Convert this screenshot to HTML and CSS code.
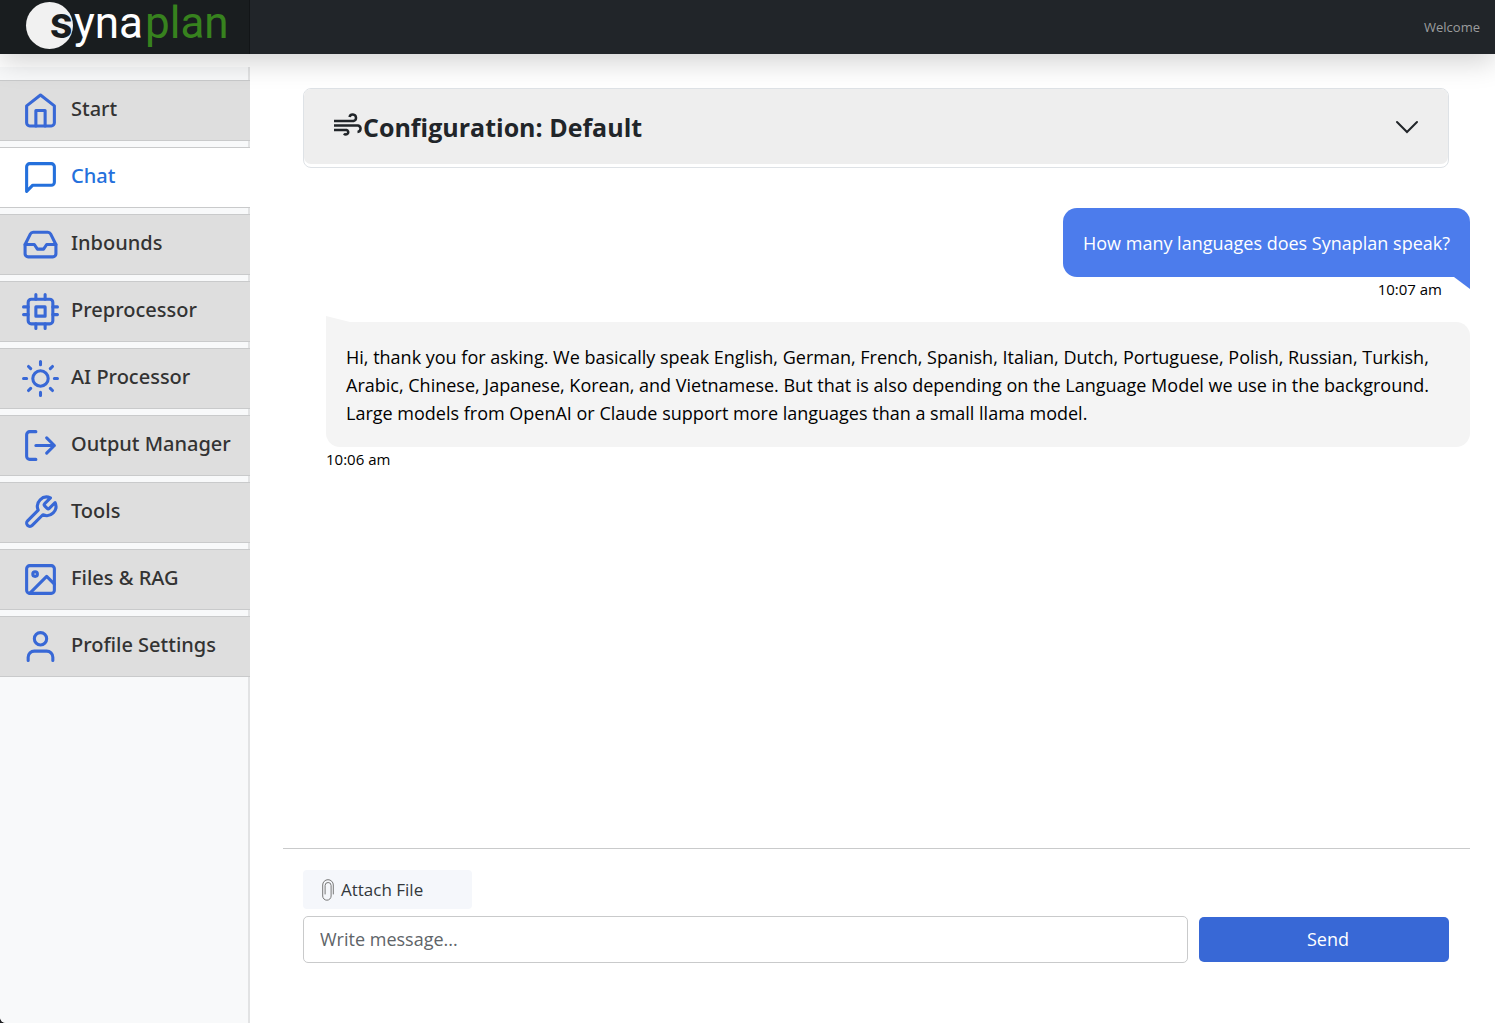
FILE: index.html
```html
<!DOCTYPE html>
<html lang="en">
<head>
<meta charset="utf-8">
<meta name="viewport" content="width=device-width, initial-scale=1">
<title>Synaplan Chat</title>
<link rel="stylesheet" href="styles.css">
</head>
<body>
<div class="app">
  <header class="topbar">
    <a class="brand" href="#" aria-label="Synaplan">
      <svg class="logo" width="210" height="54" viewBox="0 0 210 54">
        <circle cx="24.500" cy="25.500" r="23.500" fill="#f1f1f1"/>
        <text class="logo-s" x="25" y="38">s</text>
        <text class="logo-yna" x="49" y="38">yna</text>
        <text class="logo-plan" x="120" y="38">plan</text>
      </svg>
    </a>
    <span class="welcome">Welcome</span>
  </header>

  <div class="body">
    <aside class="sidebar">
      <nav class="nav">
        <a class="nav-item" href="#"><svg class="icon" viewBox="0 0 24 24"><path d="M3 9l9-7 9 7v11a2 2 0 0 1-2 2H5a2 2 0 0 1-2-2z"/><path d="M9 22V12h6v10"/></svg><span>Start</span></a>
        <a class="nav-item active" href="#" aria-current="page"><svg class="icon" viewBox="0 0 24 24"><path d="M21 15a2 2 0 0 1-2 2H7l-4 4V5a2 2 0 0 1 2-2h14a2 2 0 0 1 2 2z"/></svg><span>Chat</span></a>
        <a class="nav-item" href="#"><svg class="icon" viewBox="0 0 24 24"><path d="M22 12h-6l-2 3h-4l-2-3H2"/><path d="M5.45 5.11L2 12v6a2 2 0 0 0 2 2h16a2 2 0 0 0 2-2v-6l-3.45-6.89A2 2 0 0 0 16.76 4H7.24a2 2 0 0 0-1.79 1.11z"/></svg><span>Inbounds</span></a>
        <a class="nav-item" href="#"><svg class="icon" viewBox="0 0 24 24"><rect x="4" y="4" width="16" height="16" rx="2"/><rect x="9" y="9" width="6" height="6"/><path d="M9 1v3M15 1v3M9 20v3M15 20v3M20 9h3M20 14h3M1 9h3M1 14h3"/></svg><span>Preprocessor</span></a>
        <a class="nav-item" href="#"><svg class="icon" viewBox="0 0 24 24"><circle cx="12" cy="12" r="5"/><path d="M12 1v2M12 21v2M4.22 4.22l1.42 1.42M18.36 18.36l1.42 1.42M1 12h2M21 12h2M4.22 19.78l1.42-1.42M18.36 5.64l1.42-1.42"/></svg><span>AI Processor</span></a>
        <a class="nav-item" href="#"><svg class="icon" viewBox="0 0 24 24"><path d="M9 21H5a2 2 0 0 1-2-2V5a2 2 0 0 1 2-2h4"/><path d="M16 17l5-5-5-5M21 12H9"/></svg><span>Output Manager</span></a>
        <a class="nav-item" href="#"><svg class="icon" viewBox="0 0 24 24"><path d="M14.7 6.3a1 1 0 0 0 0 1.4l1.6 1.6a1 1 0 0 0 1.4 0l3.77-3.77a6 6 0 0 1-7.94 7.94l-6.91 6.91a2.12 2.12 0 0 1-3-3l6.91-6.91a6 6 0 0 1 7.94-7.94l-3.76 3.76z"/></svg><span>Tools</span></a>
        <a class="nav-item" href="#"><svg class="icon" viewBox="0 0 24 24"><rect x="3" y="3" width="18" height="18" rx="2"/><circle cx="8.5" cy="8.5" r="1.5"/><path d="M21 15l-5-5L5 21"/></svg><span>Files &amp; RAG</span></a>
        <a class="nav-item" href="#"><svg class="icon" viewBox="0 0 24 24"><path d="M20 21v-2a4 4 0 0 0-4-4H8a4 4 0 0 0-4 4v2"/><circle cx="12" cy="7" r="4"/></svg><span>Profile Settings</span></a>
      </nav>
    </aside>

    <main class="main">
      <section class="config">
        <button class="config-toggle" type="button" aria-expanded="false">
          <svg class="wind" viewBox="0 0 30 24"><path d="M1 8h19.500a3.300 3.300 0 1 0-4-4M1 12.500h24a3.300 3.300 0 0 1-.500 6.500M1 17h12.500a2.300 2.300 0 1 1-2.500 3.500"/></svg>
          <span class="config-title">Configuration: Default</span>
          <svg class="chevron" viewBox="0 0 24 14"><path d="M2 2l10 10L22 2"/></svg>
        </button>
      </section>

      <section class="messages">
        <article class="message user">
          <p class="bubble">How many languages does Synaplan speak?</p>
          <time class="time">10:07 am</time>
        </article>
        <article class="message bot">
          <p class="bubble">Hi, thank you for asking. We basically speak English, German, French, Spanish, Italian, Dutch, Portuguese, Polish, Russian, Turkish, Arabic, Chinese, Japanese, Korean, and Vietnamese. But that is also depending on the Language Model we use in the background. Large models from OpenAI or Claude support more languages than a small llama model.</p>
          <time class="time">10:06 am</time>
        </article>
      </section>

      <form class="composer">
        <button class="attach" type="button">
          <svg class="clip" viewBox="0 0 12 22"><path d="M11.300 15V6a5.300 5.300 0 0 0-10.600 0v11a4.200 4.200 0 0 0 8.400 0V6.500a3 3 0 0 0-6 0V15"/></svg>
          Attach File
        </button>
        <div class="compose-row">
          <input class="message-input" type="text" placeholder="Write message..." aria-label="Write message">
          <button class="send" type="submit">Send</button>
        </div>
      </form>
    </main>
  </div>
</div>
</body>
</html>
```
FILE: styles.css
```css
* { box-sizing: border-box; }
html { background: #202124; }
body {
  margin: 0;
  font-family: "Open Sans", "Noto Sans", sans-serif;
  font-size: 18px;
  color: #000;
}
button, input { font: inherit; }

.app {
  display: flex;
  flex-direction: column;
  min-height: 100vh;
  background: #fff;
  border-bottom-left-radius: 6px;
  overflow: hidden;
}

.topbar {
  display: flex;
  align-items: center;
  justify-content: space-between;
  height: 54px;
  padding-right: 15px;
  background: #212529;
  box-shadow: 0 8px 28px rgba(0, 0, 0, .175);
  position: relative;
  z-index: 1;
}
.brand {
  display: flex;
  width: 250px;
  height: 54px;
  padding-left: 25px;
  background: #191d1f;
  box-shadow: inset -1px 0 0 rgba(0, 0, 0, .25);
}
.logo {
  display: block;
  overflow: visible;
  font-family: Roboto, sans-serif;
  font-size: 44px;
}
.logo-s { fill: #191d1f; font-weight: 700; }
.logo-yna { fill: #fff; }
.logo-plan { fill: #37821e; }
.welcome { font-size: 13px; color: #9b9d9e; }

.body { flex: 1; display: flex; }

.sidebar { flex: 0 0 250px; padding-top: 13px; }
.nav {
  display: flex;
  flex-direction: column;
  gap: 6px;
  height: 100%;
  padding-top: 13px;
  background: #f8f9fa;
  box-shadow: inset -2px 0 0 #e2e3e4;
}
.nav-item {
  display: flex;
  align-items: center;
  gap: 12px;
  height: 61px;
  padding-left: 22px;
  border: solid #c9cacb;
  border-width: 1px 0;
  background: #dedede;
  color: #333;
  font-family: "Noto Sans", "Open Sans", sans-serif;
  font-size: 20px;
  font-weight: 500;
  line-height: 28px;
  text-decoration: none;
}
.nav-item span { padding-bottom: 4px; }
.nav-item.active { background: #fff; color: #2470dc; }
.icon {
  width: 37px;
  height: 37px;
  fill: none;
  stroke: #3868d6;
  stroke-width: 2;
  stroke-linecap: round;
  stroke-linejoin: round;
}
.active .icon { stroke: #2470dc; }

.main {
  flex: 1;
  min-width: 0;
  display: flex;
  flex-direction: column;
  padding: 34px 25px 60px 33px;
}

.config {
  margin: 0 21px 0 20px;
  padding-bottom: 3px;
  border: 1px solid #dee2e6;
  border-radius: 8px;
}
.config-toggle {
  display: flex;
  align-items: center;
  width: 100%;
  height: 75px;
  padding: 0 29px;
  border: 0;
  border-radius: 7px;
  background: #eee;
  color: #212529;
}
.wind {
  width: 30px;
  height: 24px;
  margin-bottom: 4px;
  fill: none;
  stroke: #212529;
  stroke-width: 2.5;
}
.config-title { flex: 1; text-align: left; font-size: 25px; font-weight: 700; }
.chevron { width: 24px; height: 14px; fill: none; stroke: #212529; stroke-width: 2; stroke-linecap: round; }

.messages { flex: 1; padding-top: 40px; }
.message { display: flex; flex-direction: column; }
.message.user { align-items: flex-end; }
.message.bot { align-items: flex-start; margin: 20px 0 0 43px; }
.bubble {
  position: relative;
  margin: 0;
  padding: 21px 20px 20px;
  border-radius: 14px;
  line-height: 28px;
}
.user .bubble { background: #4c7cec; color: #fff; border-bottom-right-radius: 0; }
.user .bubble::after {
  content: "";
  position: absolute;
  top: 100%;
  right: 0;
  width: 16px;
  height: 12px;
  background: #4c7cec;
  clip-path: polygon(0 0, 100% 0, 100% 100%);
}
.bot .bubble { background: #f4f4f4; border-top-left-radius: 0; }
.bot .bubble::before {
  content: "";
  position: absolute;
  bottom: 100%;
  left: 0;
  width: 24px;
  height: 6px;
  background: #f4f4f4;
  clip-path: polygon(0 0, 100% 100%, 0 100%);
}
.time { font-size: 15px; line-height: 25px; }
.user .time { padding-right: 28px; }

.composer {
  padding: 21px 21px 0 20px;
  border-top: 1px solid #c9cacb;
}
.attach {
  display: flex;
  align-items: center;
  gap: 7px;
  width: 169px;
  height: 39px;
  margin-bottom: 7px;
  padding: 0 19px;
  border: 0;
  border-radius: 4px;
  background: #f5f7fb;
  color: #33373b;
  font-size: 17px;
}
.clip { width: 12px; height: 22px; fill: none; stroke: #777; stroke-width: 1; stroke-linecap: round; }
.compose-row { display: flex; align-items: center; gap: 11px; }
.message-input {
  flex: 1;
  min-width: 0;
  height: 47px;
  padding: 0 16px 2px;
  border: 1px solid #c9cacb;
  border-radius: 5px;
  background: #fff;
}
.message-input::placeholder { color: #606468; opacity: 1; }
.send {
  width: 250px;
  height: 45px;
  padding: 0 0 2px 8px;
  border: 0;
  border-radius: 5px;
  background: #3868d6;
  color: #fff;
}
```
